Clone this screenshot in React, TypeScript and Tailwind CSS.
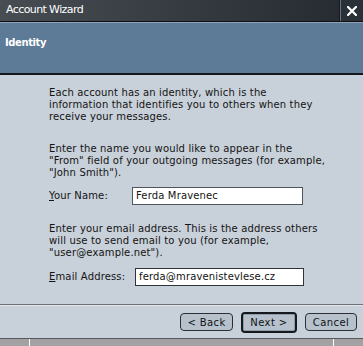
import React from 'react';

const font = { fontFamily: '"DejaVu Sans", Verdana, sans-serif' };

const WizardButton: React.FC<{ label: string; width: string; primary?: boolean }> = ({ label, width, primary }) => {
  if (primary) {
    return (
      <div className={`${width} h-[21px] rounded-[4px] border-2 border-[#15181c] bg-[#b6c1cc] flex items-center justify-center`}>
        <div className="w-full h-full rounded-[2px] border border-[#8f9cab] flex items-center justify-center text-[10px] text-[#101215] tracking-[0.4px]">
          {label}
        </div>
      </div>
    );
  }
  return (
    <div className={`${width} h-[18px] rounded-[4px] border border-[#2b2f35] bg-[#b6c1cc] flex items-center justify-center text-[10px] text-[#101215] tracking-[0.4px]`}>
      {label}
    </div>
  );
};

const App: React.FC = () => {
  return (
    <div className="w-[363px] h-[346px] flex flex-col bg-[#c8d0d9] overflow-hidden" style={font}>
      {/* title bar */}
      <div className="h-[21px] flex bg-gradient-to-r from-[#484d53] to-[#252a30]">
        <div className="flex-1 pl-[6px] flex items-center text-[11px] text-white tracking-[-0.6px]">Account Wizard</div>
        <div className="w-px bg-[#16191d]" />
        <div className="w-px bg-[#6b737c]" />
        <div className="w-[22px] bg-[#2a3037] flex items-center justify-center">
          <svg width="10" height="10" viewBox="0 0 10 10">
            <path d="M1 1 L9 9 M9 1 L1 9" stroke="#ffffff" strokeWidth="2.2" strokeLinecap="square" />
          </svg>
        </div>
      </div>
      <div className="h-px bg-[#0d0f12]" />
      <div className="h-px bg-[#8ea4bb]" />

      {/* header */}
      <div className="h-[50px] bg-[#5d7a96] pl-[5px] pt-[14px]">
        <div className="text-[10px] font-bold text-white leading-[12px] tracking-[-0.4px]">Identity</div>
      </div>
      <div className="h-[2px] bg-[#141619]" />

      {/* content */}
      <div className="h-[229px] pl-[49px] pt-[12px] text-[10px] leading-[12px] text-[#141414] tracking-[0.15px]">
        <p>
          Each account has an identity, which is the
          <br />
          information that identifies you to others when they
          <br />
          receive your messages.
        </p>
        <p className="mt-[20px]">
          Enter the name you would like to appear in the
          <br />
          "From" field of your outgoing messages (for example,
          <br />
          "John Smith").
        </p>
        <div className="mt-[8px] flex items-center h-[18px]">
          <span className="w-[83px]">
            <span className="underline">Y</span>our Name:
          </span>
          <div className="w-[171px] h-[18px] bg-white border border-[#4f555d] pl-[3px] flex items-center">
            Ferda Mravenec
          </div>
        </div>
        <p className="mt-[18px]">
          Enter your email address. This is the address others
          <br />
          will use to send email to you (for example,
          <br />
          "user@example.net").
        </p>
        <div className="mt-[9px] flex items-center h-[18px]">
          <span className="w-[86px]">
            <span className="underline">E</span>mail Address:
          </span>
          <div className="w-[169px] h-[18px] bg-white border border-[#2f343a] pl-[3px] flex items-center">
            ferda@mravenistevlese.cz
          </div>
        </div>
      </div>
      <div className="h-px bg-[#6c7178]" />
      <div className="h-px bg-[#e3e7eb]" />

      {/* buttons */}
      <div className="h-[32px] flex items-center justify-end gap-[8px] pr-[6px]">
        <WizardButton label="< Back" width="w-[53px]" />
        <WizardButton label="Next >" width="w-[56px]" primary />
        <WizardButton label="Cancel" width="w-[52px]" />
      </div>

      {/* bottom strip */}
      <div className="h-px bg-[#55585c]" />
      <div className="flex-1 flex bg-[#a3a1a4]">
        <div className="w-[29px]" />
        <div className="w-px bg-white" />
        <div className="flex-1" />
        <div className="w-px bg-white" />
        <div className="w-[29px]" />
      </div>
    </div>
  );
};

export default App;
